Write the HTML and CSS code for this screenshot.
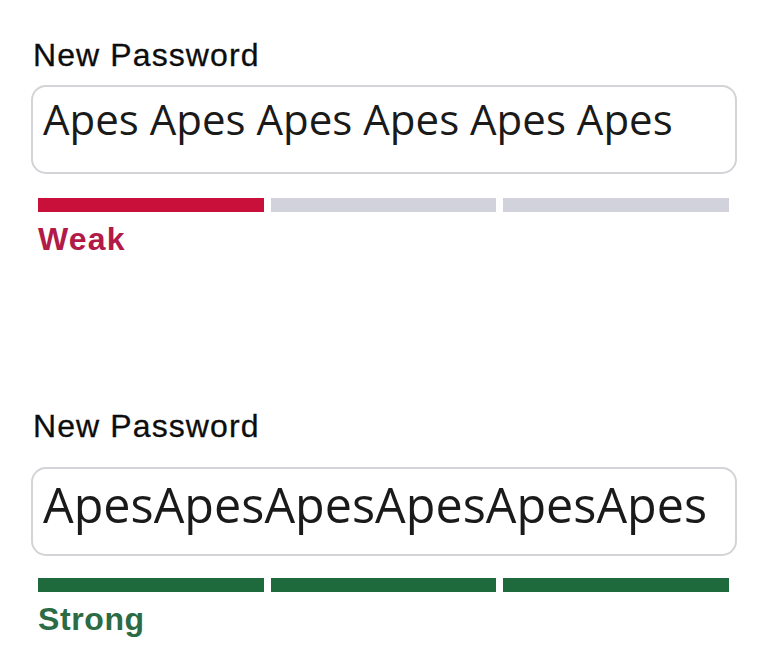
FILE: index.html
```html
<!DOCTYPE html>
<html lang="en">
<head>
<meta charset="utf-8">
<title>New Password</title>
<link rel="stylesheet" href="styles.css">
</head>
<body>
  <main class="page">
    <section class="block block--weak">
      <div class="label">New Password</div>
      <div class="field field--spaced">Apes Apes Apes Apes Apes Apes</div>
      <div class="meter">
        <span class="seg seg--weak"></span>
        <span class="seg"></span>
        <span class="seg"></span>
      </div>
      <div class="status status--weak">Weak</div>
    </section>
    <section class="block block--strong">
      <div class="label">New Password</div>
      <div class="field field--joined">ApesApesApesApesApesApes</div>
      <div class="meter">
        <span class="seg seg--strong"></span>
        <span class="seg seg--strong"></span>
        <span class="seg seg--strong"></span>
      </div>
      <div class="status status--strong">Strong</div>
    </section>
  </main>
</body>
</html>
```

FILE: styles.css
```css
html, body {
  margin: 0;
  padding: 0;
  background: #ffffff;
}

.page {
  width: 706px;
  padding: 38px 0 0 31px;
  display: flex;
  flex-direction: column;
}

.block {
  display: flex;
  flex-direction: column;
}

.block--strong {
  margin-top: 151px;
}

.label {
  font-family: "Liberation Sans", Arial, sans-serif;
  font-size: 32px;
  line-height: 34px;
  letter-spacing: 1.1px;
  color: #0d0d0d;
  margin-left: 2px;
  -webkit-text-stroke: 0.3px #0d0d0d;
}

.field {
  box-sizing: border-box;
  height: 89px;
  border: 2px solid #d3d3d8;
  border-radius: 15px;
  padding: 3px 0 0 10px;
  font-family: "Open Sans", "Noto Sans", sans-serif;
  color: #1a1a1a;
  white-space: nowrap;
  overflow: hidden;
}

.field--spaced {
  margin-top: 13px;
  font-size: 42px;
  line-height: 57px;
}

.field--joined {
  margin-top: 24px;
  font-size: 48.5px;
  line-height: 66px;
  padding-top: 2px;
}

.meter {
  display: grid;
  grid-template-columns: repeat(3, 1fr);
  gap: 7px;
  margin: 24px 8px 0 7px;
}

.block--strong .meter {
  margin-top: 22px;
}

.seg {
  height: 14px;
  background: #d2d2dc;
}

.seg--weak {
  background: #c8103a;
}

.seg--strong {
  background: #1f6a3d;
}

.status {
  margin: 8px 0 0 7px;
  font-family: "Liberation Sans", Arial, sans-serif;
  font-weight: bold;
  font-size: 32px;
  line-height: 38px;
}

.status--weak {
  color: #b21a47;
  letter-spacing: 1.2px;
}

.status--strong {
  color: #2b6b45;
  letter-spacing: 0.6px;
}
```
